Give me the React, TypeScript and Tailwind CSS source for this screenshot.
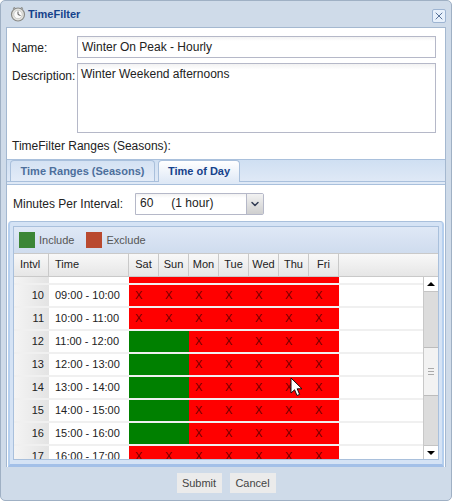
import { ChevronDown, X } from 'lucide-react';

const days = ['Sat', 'Sun', 'Mon', 'Tue', 'Wed', 'Thu', 'Fri'];

const rows = [
  { id: 10, time: '09:00 - 10:00', include: false },
  { id: 11, time: '10:00 - 11:00', include: false },
  { id: 12, time: '11:00 - 12:00', include: true },
  { id: 13, time: '12:00 - 13:00', include: true },
  { id: 14, time: '13:00 - 14:00', include: true },
  { id: 15, time: '14:00 - 15:00', include: true },
  { id: 16, time: '15:00 - 16:00', include: true },
  { id: 17, time: '16:00 - 17:00', include: false },
];

function ClockIcon() {
  return (
    <svg width="16" height="16" viewBox="0 0 16 16" className="shrink-0">
      <circle cx="8" cy="8.5" r="6.5" fill="#e4e4e0" stroke="#8a8a86" strokeWidth="1.2" />
      <circle cx="8" cy="8.5" r="4.2" fill="#fafafa" stroke="#b5b5b0" strokeWidth="0.6" />
      <path d="M8 5.5V8.5L10.5 9.5" fill="none" stroke="#555" strokeWidth="1" />
      <path d="M3 2.5L5 1.5M13 2.5L11 1.5" stroke="#8a8a86" strokeWidth="1.2" />
    </svg>
  );
}

function Cursor() {
  return (
    <svg width="14" height="20" viewBox="0 0 14 20" className="absolute left-[289px] top-[376px]">
      <path d="M1 1V16L4.6 12.8L7 18.5L9.6 17.4L7.2 11.8H12Z" fill="#fff" stroke="#111" strokeWidth="1" />
    </svg>
  );
}

function DayCells({ include }: { include: boolean }) {
  return (
    <div className="flex w-[210px] h-[21px]">
      {days.map((day, i) => {
        const green = include && i < 2;
        return (
          <div
            key={day}
            className={`w-[30px] flex items-center pl-[6px] text-[11px] text-[#6d0000] ${green ? 'bg-[#008000]' : 'bg-[#ff0000]'}`}
          >
            {green ? '' : 'X'}
          </div>
        );
      })}
    </div>
  );
}

function GridRow({ id, time, include }: { id: number; time: string; include: boolean }) {
  return (
    <div className="flex h-[23px] border-b-2 border-[#f0f0f0]">
      <div className="w-[35px] border-r border-[#e4e4e4] bg-gradient-to-r from-[#f4f4f4] to-[#e4e4e4] text-right pr-[4px] text-[11px] leading-[21px] text-[#222]">
        {id}
      </div>
      <div className="w-[80px] pl-[6px] text-[11px] leading-[20px] text-[#222]">{time}</div>
      <DayCells include={include} />
    </div>
  );
}

function Scrollbar() {
  return (
    <div className="w-[15px] h-full flex flex-col bg-[#dcdcdc] border-l border-[#c8c8c8]">
      <div className="h-[15px] bg-white flex items-center justify-center border-b border-[#c4c4c4]">
        <div className="w-0 h-0 border-x-[4px] border-x-transparent border-b-[4px] border-b-black" />
      </div>
      <div className="h-[55px]" />
      <div className="h-[49px] bg-[#f2f2f2] border-y border-[#bcbcbc] flex items-center justify-center">
        <div className="w-[6px] h-[7px] border-y border-[#aaa] flex items-center">
          <div className="w-full h-px bg-[#aaa]" />
        </div>
      </div>
      <div className="flex-1" />
      <div className="h-[14px] bg-white flex items-center justify-center border-t border-[#c4c4c4]">
        <div className="w-0 h-0 border-x-[4px] border-x-transparent border-t-[4px] border-t-black" />
      </div>
    </div>
  );
}

function Grid() {
  return (
    <div className="mx-[3px] border-x border-t border-[#a9c0dc] bg-white">
      <div className="flex items-center h-[26px] px-[5px] gap-[4px] bg-gradient-to-b from-[#dfe8f6] to-[#cfdcee] text-[11px] text-[#555]">
        <div className="w-[16px] h-[16px] bg-[#3c8636]" />
        <span className="mr-[8px]">Include</span>
        <div className="w-[16px] h-[16px] bg-[#b9492f]" />
        <span>Exclude</span>
      </div>
      <div className="flex h-[24px] bg-gradient-to-b from-[#f8f8f8] to-[#e6e6e6] border-y border-[#c9c9c9] text-[11px] leading-[20px] text-[#222]">
        <div className="w-[35px] pl-[6px] border-r border-[#c9c9c9]">Intvl</div>
        <div className="w-[80px] pl-[6px] border-r border-[#c9c9c9]">Time</div>
        {days.map((day) => (
          <div key={day} className="w-[30px] text-center border-r border-[#c9c9c9]">
            {day}
          </div>
        ))}
      </div>
      <div className="flex h-[183px] border-b border-[#a9c0dc]">
        <div className="w-[409px] h-full overflow-hidden">
          {/* row 9 is scrolled almost out of view, only its bottom edge shows */}
          <div className="flex h-[8px] border-b-2 border-[#f0f0f0]">
            <div className="w-[35px] border-r border-[#e4e4e4] bg-gradient-to-r from-[#f4f4f4] to-[#e4e4e4]" />
            <div className="w-[80px]" />
            <div className="w-[210px] bg-[#ff0000]" />
          </div>
          {rows.map((row) => (
            <GridRow key={row.id} {...row} />
          ))}
        </div>
        <Scrollbar />
      </div>
    </div>
  );
}

export default function App() {
  return (
    <div className="relative w-[452px] h-[501px] flex flex-col overflow-hidden rounded-[5px] border border-[#9fb0c4] bg-[#cfdbe9] font-['Liberation_Sans',Arial,sans-serif] text-[12px] text-[#222]">
      <div className="flex items-center h-[26px] pl-[9px] pr-[5px] gap-[2px] shrink-0">
        <ClockIcon />
        <span className="text-[11px] font-bold text-[#15428b]">TimeFilter</span>
        <button className="ml-auto mt-[3px] w-[14px] h-[14px] flex items-center justify-center rounded-[2px] border border-[#9db4d2] bg-[#e7f0fb] text-[#2a4a7a]">
          <X size={12} strokeWidth={1.5} />
        </button>
      </div>

      <div className="mx-[5px] h-[440px] shrink-0 flex flex-col border-t border-x border-[#a4b8d0] bg-white">
        <div className="flex pt-[8px] pl-[5px] pr-[9px] items-center">
          <label className="w-[65px] pt-[2px]">Name:</label>
          <input
            readOnly
            value="Winter On Peak - Hourly"
            className="flex-1 h-[22px] px-[4px] border border-[#b5b8c8] bg-gradient-to-b from-[#f2f2f2] to-white to-[20%] text-[12px] text-[#222] outline-none"
          />
        </div>
        <div className="flex pt-[5px] pl-[5px] pr-[9px]">
          <label className="w-[65px] pt-[4px]">Description:</label>
          <textarea
            readOnly
            value="Winter Weekend afternoons"
            className="flex-1 h-[70px] px-[3px] pt-px border border-[#b5b8c8] bg-gradient-to-b from-[#f2f2f2] to-white to-[8%] text-[12px] text-[#222] outline-none resize-none"
          />
        </div>
        <div className="pl-[5px] pt-[6px] h-[26px] leading-[15px]">TimeFilter Ranges (Seasons):</div>

        <div className="flex h-[23px] items-end pl-[3px] gap-[3px] border-t border-b border-[#a9c0dc] bg-gradient-to-b from-[#cfdff2] to-[#dfe9f6] shrink-0">
          <div className="w-[145px] h-[21px] rounded-t-[4px] border-x border-t border-[#a9c0dc] bg-gradient-to-b from-[#d4e2f3] to-[#e3ecf8] text-center text-[11px] font-bold leading-[20px] text-[#4d6f9c]">
            Time Ranges (Seasons)
          </div>
          <div className="w-[82px] h-[22px] -mb-[1px] rounded-t-[4px] border-x border-t border-[#a9c0dc] bg-gradient-to-b from-white to-[#dfe9f6] text-center text-[11px] font-bold leading-[21px] text-[#15428b]">
            Time of Day
          </div>
        </div>
        <div className="h-[3px] shrink-0 bg-[#dfe9f6] border-b border-[#a9c0dc]" />

        <div className="flex items-center pt-[8px] pl-[6px]">
          <label className="w-[122px]">Minutes Per Interval:</label>
          <div className="flex w-[129px] h-[22px] border border-[#b5b8c8] rounded-r-[2px] bg-gradient-to-b from-[#f2f2f2] to-white to-[20%]">
            <span className="flex-1 pl-[4px] leading-[19px] whitespace-pre">
              60<span className="ml-[18px]">(1 hour)</span>
            </span>
            <div className="w-[17px] flex items-center justify-center border-l border-[#b5b8c8] bg-gradient-to-b from-[#f2f2f2] to-[#cfcfcf] text-[#333d55]">
              <ChevronDown size={12} strokeWidth={3} />
            </div>
          </div>
        </div>

        <div className="mt-[6px] mx-px pt-[4px] flex-1 rounded-t-[4px] border-t border-x-2 border-b-[3px] border-t-[#a9c0dc] border-x-[#b5cfee] border-b-[#a3c0e8] bg-[#d5e3f5]">
          <Grid />
        </div>
      </div>

      <div className="flex justify-center gap-[8px] pt-[6px]">
        <button className="w-[45px] h-[20px] bg-[#ebebeb] text-[11px] text-[#444]">Submit</button>
        <button className="w-[46px] h-[20px] bg-[#ebebeb] text-[11px] text-[#444]">Cancel</button>
      </div>

      <Cursor />
    </div>
  );
}
